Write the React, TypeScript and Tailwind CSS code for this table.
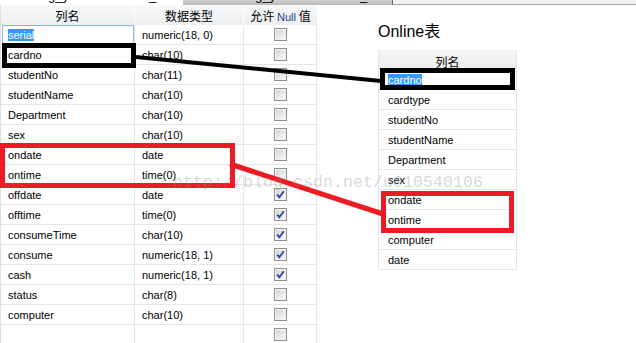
import React from "react";

type Row = [string, string, boolean];

const leftRows: Row[] = [
  ["serial", "numeric(18, 0)", false],
  ["cardno", "char(10)", false],
  ["studentNo", "char(11)", false],
  ["studentName", "char(10)", false],
  ["Department", "char(10)", false],
  ["sex", "char(10)", false],
  ["ondate", "date", false],
  ["ontime", "time(0)", false],
  ["offdate", "date", true],
  ["offtime", "time(0)", true],
  ["consumeTime", "char(10)", true],
  ["consume", "numeric(18, 1)", true],
  ["cash", "numeric(18, 1)", true],
  ["status", "char(8)", false],
  ["computer", "char(10)", false],
  ["", "", false],
];

const rightRows = [
  "cardno",
  "cardtype",
  "studentNo",
  "studentName",
  "Department",
  "sex",
  "ondate",
  "ontime",
  "computer",
  "date",
];

function Checkbox({ checked }: { checked: boolean }) {
  return (
    <span className="flex h-[13px] w-[13px] items-center justify-center border border-[#8e8f8f] bg-gradient-to-br from-[#d2d2d2] to-[#fbfbfb] shadow-[inset_0_0_0_1px_#f4f4f4]">
      {checked && (
        <svg width="11" height="11" viewBox="0 0 11 11">
          <path d="M2.2 5.6 L4.4 8.2 L8.8 2.2" fill="none" stroke="#2b4a9f" strokeWidth="1.9" />
        </svg>
      )}
    </span>
  );
}

export default function App() {
  const cjk = { fontFamily: '"Noto Sans CJK SC", "Liberation Sans", sans-serif' };
  return (
    <div
      className="relative h-[343px] w-[636px] overflow-hidden bg-white text-[11px] text-black"
      style={{ fontFamily: '"Liberation Sans", Arial, sans-serif' }}
    >
      {/* top strip (cut-off tabs) */}
      <div className="flex h-[5px] overflow-hidden">
        <div className="w-[183px] bg-white">
          <div className="-mt-[12px] flex h-[16px] text-[13px] leading-[16px]">
            <span className="ml-[48px]">g_y</span>
            <span className="ml-[80px]">_</span>
          </div>
        </div>
        <div className="w-[210px] border-r border-[#6f6f6f] bg-gradient-to-b from-[#cfcfcf] to-[#bcbcbc]">
          <div className="-mt-[12px] flex h-[16px] text-[13px] leading-[16px]">
            <span className="ml-[72px]">g_y</span>
            <span className="ml-[84px]">_</span>
          </div>
        </div>
        <div className="flex-1 border-b border-[#a9a9a9] bg-[#f2f2f2]" />
      </div>

      <div className="flex">
        {/* left table */}
        <div className="w-[317px] border-l border-[#dedede]">
          <div
            className="grid h-[20px] grid-cols-[134px_109px_73px] bg-gradient-to-b from-[#f7f8f9] to-[#eceef0] text-[12px] leading-[22px]"
            style={cjk}
          >
            <div className="h-[20px] overflow-hidden border-r border-white text-center">列名</div>
            <div className="h-[20px] overflow-hidden border-r border-white text-center">数据类型</div>
            <div className="h-[20px] overflow-hidden text-center">
              允许 <span className="text-[11px] text-[#1d3a86]" style={{ fontFamily: '"Liberation Sans", sans-serif' }}>Null</span> 值
            </div>
          </div>
          {leftRows.map(([name, type, nul], i) => (
            <div key={i} className="grid h-[20px] grid-cols-[134px_109px_73px]">
              <div className="h-[20px] border-r border-b border-[#e6e6e6] pt-[1px] pl-[7px] leading-[19px]">
                {i === 0 ? (
                  <div className="-mt-[1px] -ml-[6px] h-[20px] border border-[#86b8ea] pt-[1px] pl-[5px] leading-[17px]">
                    <span className="bg-[#3399ff] text-white">{name}</span>
                  </div>
                ) : (
                  name
                )}
              </div>
              <div className="h-[20px] border-r border-b border-[#e6e6e6] pt-[1px] pl-[7px] leading-[19px]">{type}</div>
              <div className="flex h-[20px] items-center justify-center border-r border-b border-[#e6e6e6]">
                <Checkbox checked={nul} />
              </div>
            </div>
          ))}
        </div>

        {/* right panel */}
        <div className="flex-1 pl-[61px]">
          <div className="mt-[17px] h-[20px] text-[16px] leading-[20px]" style={{ fontFamily: '"Liberation Sans", "Noto Sans CJK SC", sans-serif' }}>
            Online表
          </div>
          <div className="mt-[8px] w-[139px] border-x border-[#e4e4e4]">
            <div className="h-[20px] overflow-hidden bg-gradient-to-b from-[#f3f4f5] to-[#eceef0] text-center text-[12px] leading-[23px]" style={cjk}>
              列名
            </div>
            {rightRows.map((r, i) => (
              <div key={i} className="h-[20px] border-b border-[#e8e8e8] pt-[1px] pl-[9px] leading-[19px]">
                {i === 0 ? <span className="bg-[#3399ff] text-white">{r}</span> : r}
              </div>
            ))}
          </div>
        </div>
      </div>

      {/* annotations drawn over the screenshot */}
      <svg className="pointer-events-none absolute inset-0" width="636" height="343" viewBox="0 0 636 343">
        <rect x="4.5" y="45.5" width="129" height="20" fill="none" stroke="#000" strokeWidth="5" />
        <rect x="382.5" y="70.5" width="130" height="17" fill="none" stroke="#000" strokeWidth="5" />
        <line x1="136" y1="57" x2="381" y2="81" stroke="#000" strokeWidth="4" />
        <rect x="2.5" y="145.5" width="230" height="40" fill="none" stroke="#ed1c24" strokeWidth="5" />
        <rect x="383.5" y="193.5" width="128" height="37" fill="none" stroke="#ed1c24" strokeWidth="5" />
        <line x1="230" y1="164" x2="383" y2="214" stroke="#ed1c24" strokeWidth="5" />
        <text
          x="173"
          y="187"
          fontSize="16.5"
          textLength="310"
          fill="rgba(140,140,140,0.35)"
          style={{ fontFamily: '"Liberation Mono", "Courier New", monospace' }}
        >
          http://blog.csdn.net/u010540106
        </text>
      </svg>
    </div>
  );
}
